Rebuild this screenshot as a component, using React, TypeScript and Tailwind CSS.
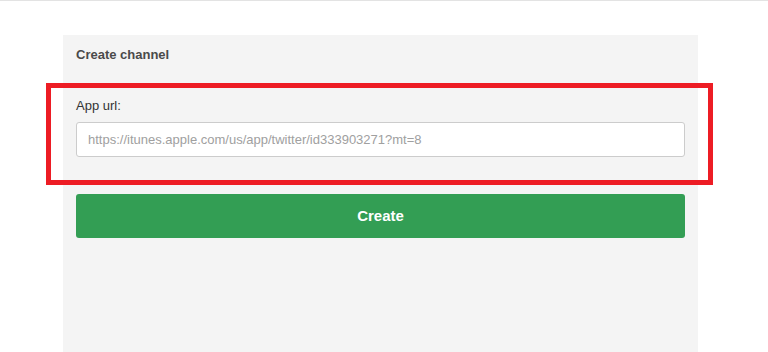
import React from "react";

export default function App() {
  return (
    <div
      className="relative w-[768px] h-[352px] overflow-hidden bg-white border-t border-[#e3e3e3]"
      style={{ fontFamily: '"Liberation Sans", Arial, sans-serif' }}
    >
      <div className="ml-[63px] mt-[34px] w-[635px] h-[330px] bg-[#f4f4f4] px-[13px] pt-[12px]">
        <h2 className="text-[13px] leading-[16px] font-bold text-[#4a4a4a]">Create channel</h2>
        <div className="mt-[35px] flex flex-col">
          <label className="text-[13px] leading-[16px] text-[#333]">App url:</label>
          <input
            type="text"
            placeholder="https://itunes.apple.com/us/app/twitter/id333903271?mt=8"
            className="mt-[8px] h-[35px] w-[609px] rounded-[3px] border border-[#cccccc] bg-white px-[11px] text-[13px] text-[#333] placeholder:text-[#a0a0a0] outline-none"
          />
        </div>
        <button className="mt-[37px] h-[44px] w-[609px] rounded-[3px] bg-[#339e54] text-[15px] font-bold text-white">
          Create
        </button>
      </div>
      <div className="absolute left-[46px] top-[82px] w-[667px] h-[102px] border-[5px] border-[#ed1c24]" />
    </div>
  );
}
